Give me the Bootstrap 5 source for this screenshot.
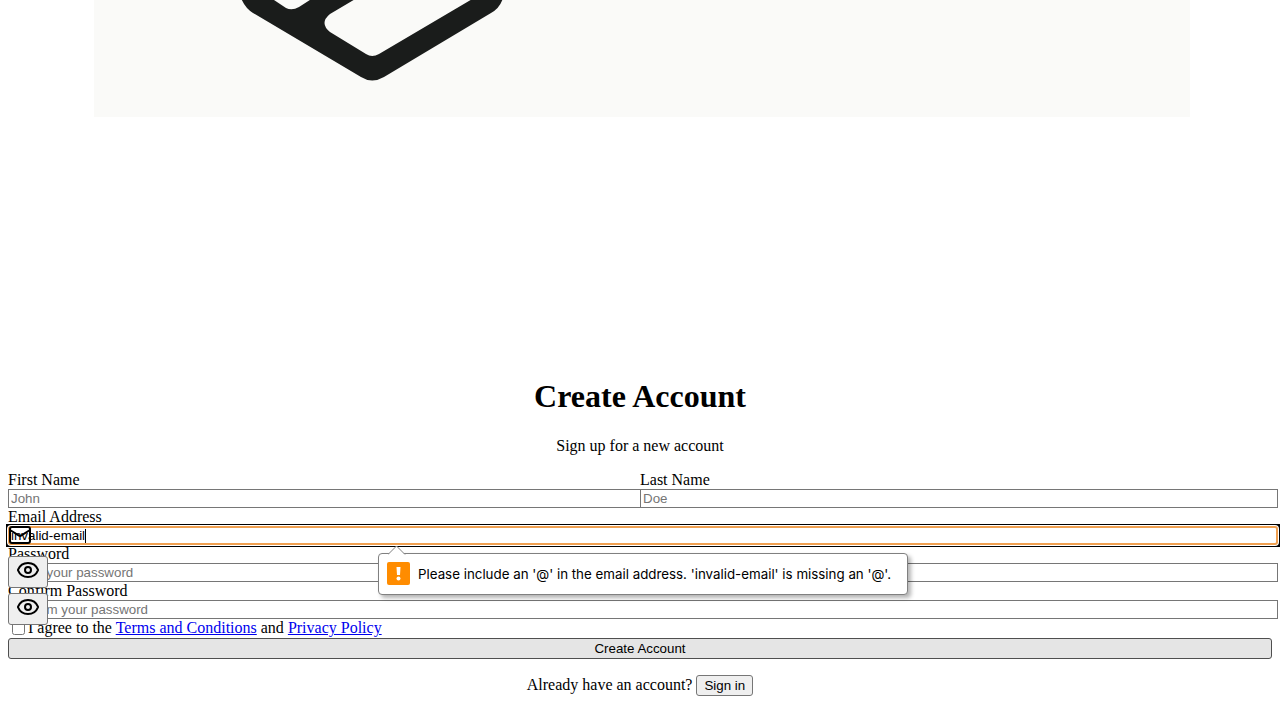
<!DOCTYPE html>
<html lang="en">
<head>
<meta charset="utf-8">
<meta name="viewport" content="width=device-width, initial-scale=1">
<title>Create Account</title>
<link href="https://cdn.jsdelivr.net/npm/bootstrap@5.3.0/dist/css/bootstrap.min.css" rel="stylesheet">
<style>
body { font-family: "Liberation Serif", "Times New Roman", serif; font-size: 16px; line-height: 18px; color: #000; background: #fff; }
a { color: #0000ee; }
h1 { font-size: 32px; line-height: 37px; font-weight: 700; margin-bottom: 22px; }
.hero-art { margin-bottom: 261px; }
.page-body { padding: 0 8px; }
.field-input, .plain-btn { font-family: "Liberation Sans", Arial, sans-serif; font-size: smaller; line-height: 15px; color: #000; }
.field-input { display: block; box-sizing: content-box; width: 100%; height: 15px; padding: 1px 2px; border: 1px solid #767676; border-radius: 0; background: #fff; outline: 0; }
.field-input::placeholder { color: #757575; opacity: 1; }
.email-box { width: calc(100% + 6px); background: #000; box-shadow: 0 0 0 2px #000; }
.email-box .field-input { box-sizing: border-box; height: 19px; padding: 0 1px; border: 2px solid #f0a050; border-radius: 3px; box-shadow: 0 0 0 1px #fff; }
.mail-icon { position: absolute; left: 0; top: -3px; }
.text-caret { position: absolute; left: 77px; top: 3px; width: 1px; height: 14px; background: #000; }
.plain-btn { padding: 2px 7px; border: 1px solid #767676; border-radius: 3px; background: #efefef; }
.submit-btn { background: #e5e5e5; border-color: #4f4f4f; margin-top: 1px; }
.eye-btn { position: absolute; left: 0; top: -7px; width: 40px; height: 32px; padding: 0 0 4px; z-index: 1; }
.eye-btn svg { display: block; margin: 0 auto; }
.agree-box { width: 13px; height: 13px; margin: 0 3px 0 4px; }
.hint-bubble { position: absolute; left: 370px; top: 27px; min-width: 530px; height: 42px; padding: 0 8px; gap: 8px; background: #fff; border: 1px solid #808080; border-radius: 4px; box-shadow: 3px 3px 4px rgba(0,0,0,.3); font-family: Inter, sans-serif; font-size: smaller; white-space: nowrap; z-index: 2; }
.hint-arrow { position: absolute; left: 9px; top: -9px; }
.hint-mark { margin-bottom: 2px; }
</style>
</head>
<body>
<svg class="hero-art d-block w-100" viewBox="0 0 1280 117" role="img" aria-label="Logo">
  <rect x="94" y="-2" width="1096" height="119" fill="#fafaf8"/>
  <path fill="#1a1c1b" fill-rule="evenodd" d="M241 -2Q245 8 253 13L361 77Q372 84 384 77L491 13Q500 8 503 -2H474L379 54Q372 58 366 54L330 32Q319 23 330 14L357 -2H313L299 7Q292 11 286 8L271 -2Z"/>
</svg>
<main class="page-body">
  <header class="text-center">
    <h1>Create Account</h1>
    <p class="mb-3">Sign up for a new account</p>
  </header>
  <form novalidate>
    <div class="row g-0">
      <div class="col-6">
        <label class="d-block" for="first">First Name</label>
        <input class="field-input" id="first" type="text" placeholder="John">
      </div>
      <div class="col-6">
        <label class="d-block" for="last">Last Name</label>
        <input class="field-input position-relative" id="last" type="text" placeholder="Doe">
      </div>
    </div>
    <label class="d-block" for="email">Email Address</label>
    <div class="email-box position-relative">
      <input class="field-input" id="email" type="email" value="invalid-email">
      <svg class="mail-icon" width="24" height="24" viewBox="0 0 24 24" fill="none" stroke="#000" stroke-width="2" stroke-linecap="round" stroke-linejoin="round" aria-hidden="true"><rect x="2" y="4" width="20" height="16" rx="2"/><path d="m22 7-8.97 5.7a1.94 1.94 0 0 1-2.06 0L2 7"/></svg>
      <span class="text-caret"></span>
      <div class="hint-bubble d-flex align-items-center" role="alert">
        <svg class="hint-arrow" width="18" height="10" viewBox="0 0 18 10" aria-hidden="true"><path d="M0 9.5L8.5 1 17 9.5" fill="#fff" stroke="#808080"/></svg>
        <svg class="hint-mark" width="23" height="23" viewBox="0 0 23 23" aria-hidden="true"><rect width="23" height="23" rx="2" fill="#ff8c00"/><path d="M9.5 5h4l-.5 8h-3z" fill="#fff"/><circle cx="11.5" cy="16.5" r="2" fill="#fff"/></svg>
        <span>Please include an '@' in the email address. 'invalid-email' is missing an '@'.</span>
      </div>
    </div>
    <label class="d-block" for="pass">Password</label>
    <div class="position-relative">
      <input class="field-input" id="pass" type="password" placeholder="Enter your password">
      <button class="plain-btn eye-btn" type="button" aria-label="Show password"><svg width="24" height="24" viewBox="0 0 24 24" fill="none" stroke="#000" stroke-width="2" stroke-linecap="round" stroke-linejoin="round"><path d="M2.062 12.348a1 1 0 0 1 0-.696 10.75 10.75 0 0 1 19.876 0 1 1 0 0 1 0 .696 10.75 10.75 0 0 1-19.876 0"/><circle cx="12" cy="12" r="3"/></svg></button>
    </div>
    <label class="d-block" for="confirm">Confirm Password</label>
    <div class="position-relative">
      <input class="field-input" id="confirm" type="password" placeholder="Confirm your password">
      <button class="plain-btn eye-btn" type="button" aria-label="Show confirmation"><svg width="24" height="24" viewBox="0 0 24 24" fill="none" stroke="#000" stroke-width="2" stroke-linecap="round" stroke-linejoin="round"><path d="M2.062 12.348a1 1 0 0 1 0-.696 10.75 10.75 0 0 1 19.876 0 1 1 0 0 1 0 .696 10.75 10.75 0 0 1-19.876 0"/><circle cx="12" cy="12" r="3"/></svg></button>
    </div>
    <div class="d-flex align-items-center">
      <input class="agree-box" id="agree" type="checkbox">
      <label for="agree">I agree to the <a href="#terms">Terms and Conditions</a> and <a href="#privacy">Privacy Policy</a></label>
    </div>
    <button class="plain-btn submit-btn d-block w-100" type="submit">Create Account</button>
  </form>
  <p class="d-flex justify-content-center align-items-baseline gap-1 mt-3 mb-4">Already have an account? <button class="plain-btn" type="button">Sign in</button></p>
</main>
<script src="https://cdn.jsdelivr.net/npm/bootstrap@5.3.0/dist/js/bootstrap.bundle.min.js"></script>
</body>
</html>
